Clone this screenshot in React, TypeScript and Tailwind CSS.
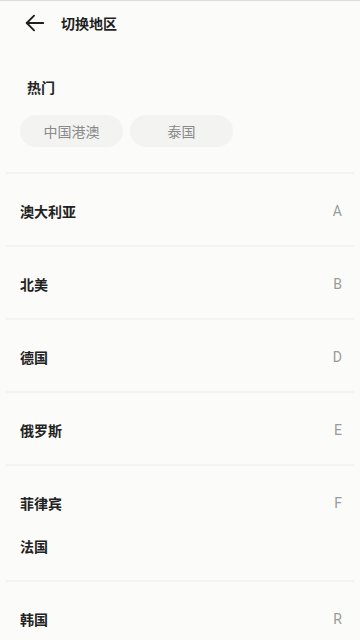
import React from "react";

const sections: { letter: string; names: string[] }[] = [
  { letter: "A", names: ["澳大利亚"] },
  { letter: "B", names: ["北美"] },
  { letter: "D", names: ["德国"] },
  { letter: "E", names: ["俄罗斯"] },
  { letter: "F", names: ["菲律宾", "法国"] },
  { letter: "R", names: ["韩国"] },
];

const hot = ["中国港澳", "泰国"];

function BackArrow() {
  return (
    <svg width="22" height="22" viewBox="0 0 24 24" fill="none" stroke="#1f1f1f" strokeWidth="2" strokeLinecap="round" strokeLinejoin="round">
      <path d="M21 12H3" />
      <path d="M11 4l-8 8 8 8" />
    </svg>
  );
}

export default function App() {
  return (
    <div
      className="w-[360px] h-[640px] overflow-hidden bg-[#fbfbf9] border-t border-[#dcdcdc]"
      style={{ fontFamily: '"Noto Sans", "Noto Sans CJK SC", sans-serif' }}
    >
      <div className="flex items-center h-[44px] pl-[24px]">
        <BackArrow />
        <span className="ml-[15px] text-[14px] font-bold text-[#1f1f1f]">切换地区</span>
      </div>

      <div className="pt-[33px] pl-[27px] text-[14px] font-semibold text-[#222] leading-[20px]">热门</div>
      <div className="flex gap-[7px] pl-[20px] pt-[17px]">
        {hot.map((h) => (
          <div
            key={h}
            className="w-[103px] h-[32px] rounded-full bg-[#f3f3f1] flex items-center justify-center text-[14px] text-[#8a8a8a]"
          >
            {h}
          </div>
        ))}
      </div>

      <div className="mt-[25px]">
        {sections.map((s) => (
          <div key={s.letter}>
            <div className="mx-[6px] h-[2px] bg-[#f3f3f1]" />
            <div className="pt-[26px] pb-[23px] flex flex-col gap-[21px]">
              {s.names.map((n, i) => (
                <div key={n} className="flex items-center justify-between pl-[20px] pr-[18px] h-[22px]">
                  <span className="text-[14px] font-bold text-[#222]">{n}</span>
                  {i === 0 && (
                    <span className="text-[14px] text-[#9a9a9a]" style={{ fontFamily: '"Roboto", sans-serif' }}>
                      {s.letter}
                    </span>
                  )}
                </div>
              ))}
            </div>
          </div>
        ))}
      </div>
    </div>
  );
}
